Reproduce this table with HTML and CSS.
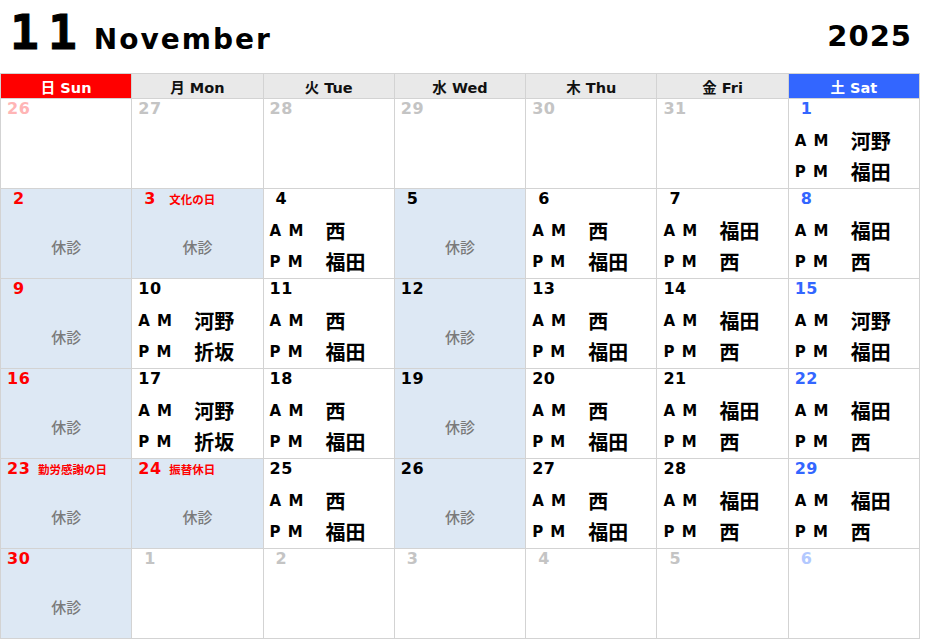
FILE: index.html
```html
<!DOCTYPE html>
<html lang="ja">
<head>
<meta charset="utf-8">
<title>2025 November</title>
<link rel="stylesheet" href="styles.css">
</head>
<body>
<header class="top">
  <div class="month"><span class="mnum">11</span><span class="mname">November</span></div>
  <div class="year">2025</div>
</header>
<main class="cal">
  <div class="wd sun">日 Sun</div>
  <div class="wd">月 Mon</div>
  <div class="wd">火 Tue</div>
  <div class="wd">水 Wed</div>
  <div class="wd">木 Thu</div>
  <div class="wd">金 Fri</div>
  <div class="wd sat">土 Sat</div>

  <!-- row 1 -->
  <div class="day"><div class="dl"><span class="dn other-sun">26</span></div></div>
  <div class="day"><div class="dl"><span class="dn other">27</span></div></div>
  <div class="day"><div class="dl"><span class="dn other">28</span></div></div>
  <div class="day"><div class="dl"><span class="dn other">29</span></div></div>
  <div class="day"><div class="dl"><span class="dn other">30</span></div></div>
  <div class="day"><div class="dl"><span class="dn other">31</span></div></div>
  <div class="day"><div class="dl"><span class="dn blue one">1</span></div>
    <div class="ln"><span class="ap">A M</span><span class="nm">河野</span></div>
    <div class="ln"><span class="ap">P M</span><span class="nm">福田</span></div></div>

  <!-- row 2 -->
  <div class="day off"><div class="dl"><span class="dn red one">2</span></div><div class="closed">休診</div></div>
  <div class="day off"><div class="dl"><span class="dn red one">3</span><span class="hol">文化の日</span></div><div class="closed">休診</div></div>
  <div class="day"><div class="dl"><span class="dn one">4</span></div>
    <div class="ln"><span class="ap">A M</span><span class="nm">西</span></div>
    <div class="ln"><span class="ap">P M</span><span class="nm">福田</span></div></div>
  <div class="day off"><div class="dl"><span class="dn one">5</span></div><div class="closed">休診</div></div>
  <div class="day"><div class="dl"><span class="dn one">6</span></div>
    <div class="ln"><span class="ap">A M</span><span class="nm">西</span></div>
    <div class="ln"><span class="ap">P M</span><span class="nm">福田</span></div></div>
  <div class="day"><div class="dl"><span class="dn one">7</span></div>
    <div class="ln"><span class="ap">A M</span><span class="nm">福田</span></div>
    <div class="ln"><span class="ap">P M</span><span class="nm">西</span></div></div>
  <div class="day"><div class="dl"><span class="dn blue one">8</span></div>
    <div class="ln"><span class="ap">A M</span><span class="nm">福田</span></div>
    <div class="ln"><span class="ap">P M</span><span class="nm">西</span></div></div>

  <!-- row 3 -->
  <div class="day off"><div class="dl"><span class="dn red one">9</span></div><div class="closed">休診</div></div>
  <div class="day"><div class="dl"><span class="dn">10</span></div>
    <div class="ln"><span class="ap">A M</span><span class="nm">河野</span></div>
    <div class="ln"><span class="ap">P M</span><span class="nm">折坂</span></div></div>
  <div class="day"><div class="dl"><span class="dn">11</span></div>
    <div class="ln"><span class="ap">A M</span><span class="nm">西</span></div>
    <div class="ln"><span class="ap">P M</span><span class="nm">福田</span></div></div>
  <div class="day off"><div class="dl"><span class="dn">12</span></div><div class="closed">休診</div></div>
  <div class="day"><div class="dl"><span class="dn">13</span></div>
    <div class="ln"><span class="ap">A M</span><span class="nm">西</span></div>
    <div class="ln"><span class="ap">P M</span><span class="nm">福田</span></div></div>
  <div class="day"><div class="dl"><span class="dn">14</span></div>
    <div class="ln"><span class="ap">A M</span><span class="nm">福田</span></div>
    <div class="ln"><span class="ap">P M</span><span class="nm">西</span></div></div>
  <div class="day"><div class="dl"><span class="dn blue">15</span></div>
    <div class="ln"><span class="ap">A M</span><span class="nm">河野</span></div>
    <div class="ln"><span class="ap">P M</span><span class="nm">福田</span></div></div>

  <!-- row 4 -->
  <div class="day off"><div class="dl"><span class="dn red">16</span></div><div class="closed">休診</div></div>
  <div class="day"><div class="dl"><span class="dn">17</span></div>
    <div class="ln"><span class="ap">A M</span><span class="nm">河野</span></div>
    <div class="ln"><span class="ap">P M</span><span class="nm">折坂</span></div></div>
  <div class="day"><div class="dl"><span class="dn">18</span></div>
    <div class="ln"><span class="ap">A M</span><span class="nm">西</span></div>
    <div class="ln"><span class="ap">P M</span><span class="nm">福田</span></div></div>
  <div class="day off"><div class="dl"><span class="dn">19</span></div><div class="closed">休診</div></div>
  <div class="day"><div class="dl"><span class="dn">20</span></div>
    <div class="ln"><span class="ap">A M</span><span class="nm">西</span></div>
    <div class="ln"><span class="ap">P M</span><span class="nm">福田</span></div></div>
  <div class="day"><div class="dl"><span class="dn">21</span></div>
    <div class="ln"><span class="ap">A M</span><span class="nm">福田</span></div>
    <div class="ln"><span class="ap">P M</span><span class="nm">西</span></div></div>
  <div class="day"><div class="dl"><span class="dn blue">22</span></div>
    <div class="ln"><span class="ap">A M</span><span class="nm">福田</span></div>
    <div class="ln"><span class="ap">P M</span><span class="nm">西</span></div></div>

  <!-- row 5 -->
  <div class="day off"><div class="dl"><span class="dn red">23</span><span class="hol">勤労感謝の日</span></div><div class="closed">休診</div></div>
  <div class="day off"><div class="dl"><span class="dn red">24</span><span class="hol">振替休日</span></div><div class="closed">休診</div></div>
  <div class="day"><div class="dl"><span class="dn">25</span></div>
    <div class="ln"><span class="ap">A M</span><span class="nm">西</span></div>
    <div class="ln"><span class="ap">P M</span><span class="nm">福田</span></div></div>
  <div class="day off"><div class="dl"><span class="dn">26</span></div><div class="closed">休診</div></div>
  <div class="day"><div class="dl"><span class="dn">27</span></div>
    <div class="ln"><span class="ap">A M</span><span class="nm">西</span></div>
    <div class="ln"><span class="ap">P M</span><span class="nm">福田</span></div></div>
  <div class="day"><div class="dl"><span class="dn">28</span></div>
    <div class="ln"><span class="ap">A M</span><span class="nm">福田</span></div>
    <div class="ln"><span class="ap">P M</span><span class="nm">西</span></div></div>
  <div class="day"><div class="dl"><span class="dn blue">29</span></div>
    <div class="ln"><span class="ap">A M</span><span class="nm">福田</span></div>
    <div class="ln"><span class="ap">P M</span><span class="nm">西</span></div></div>

  <!-- row 6 -->
  <div class="day off"><div class="dl"><span class="dn red">30</span></div><div class="closed">休診</div></div>
  <div class="day"><div class="dl"><span class="dn other one">1</span></div></div>
  <div class="day"><div class="dl"><span class="dn other one">2</span></div></div>
  <div class="day"><div class="dl"><span class="dn other one">3</span></div></div>
  <div class="day"><div class="dl"><span class="dn other one">4</span></div></div>
  <div class="day"><div class="dl"><span class="dn other one">5</span></div></div>
  <div class="day"><div class="dl"><span class="dn other-sat one">6</span></div></div>
</main>
</body>
</html>
```

FILE: styles.css
```css
* { box-sizing: border-box; }

html, body {
  margin: 0;
  padding: 0;
  background: #ffffff;
}

body {
  width: 938px;
  height: 639px;
  overflow: hidden;
  font-family: "DejaVu Sans", "Noto Sans CJK JP", sans-serif;
  color: #000;
}

.top {
  height: 73px;
  display: flex;
  justify-content: space-between;
  align-items: flex-start;
  padding: 0 26px 0 10px;
}

.month {
  display: flex;
  align-items: baseline;
  padding-top: 5px;
}

.mnum {
  font-family: "DejaVu Sans Mono", monospace;
  font-weight: bold;
  font-size: 48px;
  line-height: 54px;
  letter-spacing: 9px;
  margin-right: 8px;
  -webkit-text-stroke: 1px #000;
}

.mname {
  font-family: "DejaVu Sans", sans-serif;
  font-weight: bold;
  font-size: 28px;
  letter-spacing: 2px;
}

.year {
  font-family: "DejaVu Sans", sans-serif;
  font-weight: bold;
  font-size: 29px;
  letter-spacing: 1px;
  padding-top: 18px;
  line-height: 36px;
}

.cal {
  width: 920px;
  display: grid;
  grid-template-columns: repeat(7, 1fr);
  grid-template-rows: 24px repeat(6, 89px);
  gap: 1px;
  padding: 1px;
  background: #d3d3d3;
}

.wd {
  background: #e9e9e9;
  font-family: "DejaVu Sans", "Noto Sans CJK JP", sans-serif;
  font-weight: bold;
  font-size: 14.5px;
  display: flex;
  align-items: center;
  justify-content: center;
  color: #111;
}

.wd.sun { background: #ff0000; color: #fff; }
.wd.sat { background: #3366ff; color: #fff; }

.day {
  background: #fff;
  display: flex;
  flex-direction: column;
  padding-left: 6px;
}

.day.off { background: #dde8f4; }

.dl {
  height: 20px;
  display: flex;
  align-items: center;
  margin-bottom: 6px;
}

.dn {
  font-family: "DejaVu Sans", sans-serif;
  font-weight: bold;
  font-size: 16px;
  line-height: 18px;
  width: 31px;
  letter-spacing: 0.5px;
}

.dn.one { padding-left: 6px; }

.red { color: #ff0000; }
.blue { color: #3366ff; }
.other { color: #c4c4c4; }
.other-sun { color: #ffb5b5; }
.other-sat { color: #b3c9ff; }

.hol {
  font-family: "Noto Sans CJK JP", sans-serif;
  font-weight: bold;
  font-size: 11.5px;
  color: #ff0000;
}

.ln {
  height: 31px;
  display: flex;
  align-items: center;
}

.ap {
  width: 56px;
  font-family: "DejaVu Sans", sans-serif;
  font-weight: bold;
  font-size: 15px;
  letter-spacing: 1px;
}

.nm {
  font-family: "Noto Sans CJK JP", sans-serif;
  font-weight: bold;
  font-size: 20px;
  line-height: 24px;
}

.closed {
  flex: 1;
  display: flex;
  align-items: center;
  justify-content: center;
  margin-left: -6px;
  font-family: "Noto Sans CJK JP", sans-serif;
  font-weight: 500;
  font-size: 15px;
  color: #7a7a7a;
  padding-bottom: 1px;
}
```
